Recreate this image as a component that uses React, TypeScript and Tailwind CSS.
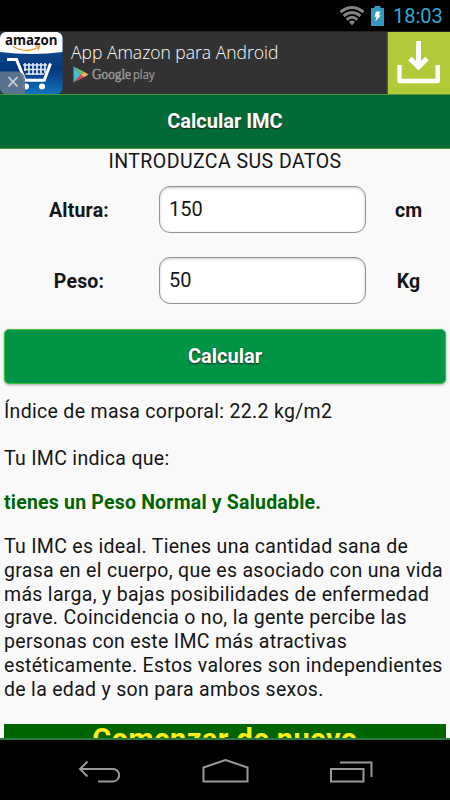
import React from 'react';

interface FieldRowProps {
  label: string;
  value: string;
  unit: string;
}

const StatusBar: React.FC = () => (
  <div className="h-[31px] bg-black flex items-center justify-end pr-[7px] shrink-0">
    <svg className="w-[26px] h-[20px] mr-[6px]" viewBox="0 0 26 20" fill="none" stroke="#848484" strokeWidth="2.9">
      <path d="M1.5 6.2Q13-3 24.5 6.2" />
      <path d="M4.6 10Q13 3.2 21.4 10" />
      <path d="M7.7 13.6Q13 9 18.3 13.6" />
      <path d="M10 15.8Q13 13.2 16 15.8L13 19.5z" fill="#848484" stroke="none" />
    </svg>
    <svg className="w-[13px] h-[20px] mr-[9px]" viewBox="0 0 13 20">
      <path d="M0 2h3.5V0h6v2H13v18H0z" fill="#3397c0" />
      <path d="M5 5.5h4.5L7.8 9.2H10L4.3 15.5l1.2-4.7H3.5z" fill="#fff" />
    </svg>
    <span className="text-[20px] leading-[31px] pt-px text-[#33a6d4] w-[50px] whitespace-nowrap">18:03</span>
  </div>
);

const AdBanner: React.FC = () => (
  <div className="h-[63px] bg-[#323232] flex shrink-0 border-t border-[#222]">
    <svg className="w-[63px] h-[62px] shrink-0" viewBox="0 0 63 62">
      <defs>
        <linearGradient id="sky" x1="0" y1="0" x2="0" y2="1">
          <stop offset="0.3" stopColor="#0c4a8c" />
          <stop offset="0.6" stopColor="#03367c" />
          <stop offset="1" stopColor="#1273bf" />
        </linearGradient>
        <clipPath id="tile">
          <rect width="62.5" height="62" rx="6" />
        </clipPath>
      </defs>
      <g clipPath="url(#tile)">
        <rect width="63" height="62" fill="url(#sky)" />
        <path d="M0 0h63v20Q31 24 0 20z" fill="#fff" />
        <path d="M13 14.5Q26 22 38 15.5M35 14.2l4.5-.2-1.3 4" fill="none" stroke="#f39221" strokeWidth="1.3" />
        <path d="M7 27.5h9.5L25 48.3h20" fill="none" stroke="#fff" strokeWidth="3" />
        <path d="M50.5 31.5L44 49" fill="none" stroke="#fff" strokeWidth="3" />
        <path d="M25 31v8M29 31v12M33 31v12M37 31v12M41 31v12M45 31v10M23 33h24M24 37.5h22M25.5 42h19" stroke="#dce8f4" strokeWidth="1.7" />
        <circle cx="26" cy="54.5" r="3" fill="#fff" />
        <circle cx="42" cy="54.5" r="3" fill="#fff" />
        <path d="M0 39.5h17a8 8 0 018 8v15H0z" fill="#63758c" fillOpacity=".9" />
        <path d="M8.5 45l9 9.5m0-9.5l-9 9.5" stroke="#ced3da" strokeWidth="1.7" />
      </g>
      <text x="5" y="12.5" fontFamily="Open Sans, sans-serif" fontWeight="700" fontSize="14" textLength="52.5" lengthAdjust="spacingAndGlyphs" fill="#111">amazon</text>
    </svg>
    <div className="flex-1 pl-2 pt-2">
      <p className="font-['Open_Sans'] font-light text-[17.5px] leading-6 text-white whitespace-nowrap">App Amazon para Android</p>
      <div className="flex items-center h-[21px] pl-[2px]">
        <svg className="w-[16px] h-[17px] mr-[3px]" viewBox="0 0 16 17">
          <path d="M.5.5v16L8 8.5z" fill="#45bdd0" />
          <path d="M.5.5L11 5.8 8 8.5z" fill="#76bd76" />
          <path d="M.5 16.5L11 11.2 8 8.5z" fill="#d94c61" />
          <path d="M11 5.8l4.5 2.7L11 11.2 8 8.5z" fill="#e9b45c" />
        </svg>
        <svg className="w-[64px] h-[20px]" viewBox="0 0 64 20" fill="#999" stroke="#999" strokeWidth=".5">
          <text x="0" y="14" fontFamily="Liberation Serif, serif" fontSize="15.5" textLength="39" lengthAdjust="spacingAndGlyphs">Google</text>
          <text x="41" y="14" fontFamily="Open Sans, sans-serif" fontSize="12" strokeWidth=".2" textLength="21.5" lengthAdjust="spacingAndGlyphs">play</text>
        </svg>
      </div>
    </div>
    <div className="w-[63px] bg-[#b1cb38] border-l border-[#555b35]">
      <svg className="w-[62px] h-[62px]" viewBox="0 0 62 62" fill="none" stroke="#fff">
        <path d="M11.5 33v16h38.2V33" strokeWidth="4.4" strokeLinejoin="round" />
        <path d="M30.5 9v25" strokeWidth="5" />
        <path d="M22 26.5l8.5 8.5 8.5-8.5" strokeWidth="5" />
      </svg>
    </div>
  </div>
);

const FieldRow: React.FC<FieldRowProps> = ({ label, value, unit }) => (
  <div className="flex items-center h-[47px]">
    <span className="w-[158px] mr-px pt-0.5 text-center font-bold text-[19.5px] tracking-[0.2px]">{label}</span>
    <div className="w-[207px] h-[47px] rounded-[11px] border border-[#929292] bg-white px-[9px] leading-[44px] shadow-[inset_0_1px_3px_rgba(0,0,0,0.2)]">{value}</div>
    <span className="flex-1 pl-px pt-0.5 text-center font-bold text-[19.5px]">{unit}</span>
  </div>
);

const NavBar: React.FC = () => (
  <div className="h-[60px] bg-black flex justify-between pl-[78px] pr-[77px] pt-[19px] shrink-0">
    <svg className="w-[44px] h-[26px]" viewBox="0 0 44 26" fill="none" stroke="#999" strokeWidth="2">
      <path d="M9.5 2.5L2 10l7.5 7.5M2 10h33a6.2 6.2 0 010 12.4H20" />
    </svg>
    <svg className="w-[48px] h-[26px]" viewBox="0 0 48 26" fill="none" stroke="#999" strokeWidth="2">
      <path d="M1.5 22.5V8.5L23.5 1 45.5 8.5v14z" />
    </svg>
    <svg className="w-[44px] h-[26px]" viewBox="0 0 44 26" fill="none" stroke="#999" strokeWidth="2">
      <path d="M2 10h32.5v12.5H2zM11 3.5h31.5V18" />
    </svg>
  </div>
);

export default function App() {
  return (
    <div className="w-[450px] h-[800px] flex flex-col overflow-hidden bg-[#f9f9f9] font-[Roboto,sans-serif] text-[20px] leading-6 text-[#151515]">
      <StatusBar />
      <AdBanner />
      <header className="h-[55px] shrink-0 bg-[#016a36] border-y border-[#4d963c] text-center leading-[53px] font-bold text-white [text-shadow:0_1px_1px_#222]">
        Calcular IMC
      </header>
      <main className="h-[589px] shrink-0 overflow-hidden">
        <p className="pt-px text-center text-[19.5px] leading-[24px] tracking-[0.45px]">INTRODUZCA SUS DATOS</p>
        <div className="pt-3 flex flex-col gap-[24px]">
          <FieldRow label="Altura:" value="150" unit="cm" />
          <FieldRow label="Peso:" value="50" unit="Kg" />
        </div>
        <div className="px-1 text-[19.5px]">
          <button className="mt-[25px] block w-full h-[55px] rounded-[5px] border border-[#3ac23a] bg-[#009446] text-[20px] font-bold text-white leading-[53px] shadow-[0_1px_3px_rgba(0,0,0,0.35)] [text-shadow:0_1px_2px_#222]">
            Calcular
          </button>
          <p className="mt-4 whitespace-nowrap tracking-[0.31px]">Índice de masa corporal: 22.2 kg/m2</p>
          <p className="mt-[23px] whitespace-nowrap tracking-[0.31px]">Tu IMC indica que:</p>
          <p className="mt-5 whitespace-nowrap font-bold tracking-[0.2px] text-[#006400]">tienes un Peso Normal y Saludable.</p>
          <p className="mt-5 whitespace-nowrap leading-[23.8px] tracking-[0.31px]">
            Tu IMC es ideal. Tienes una cantidad sana de<br />
            grasa en el cuerpo, que es asociado con una vida<br />
            más larga, y bajas posibilidades de enfermedad<br />
            grave. Coincidencia o no, la gente percibe las<br />
            personas con este IMC más atractivas<br />
            estéticamente. Estos valores son independientes<br />
            de la edad y son para ambos sexos.
          </p>
          <div className="mt-[22px] h-[60px] bg-[#006400] text-center text-[29px] leading-[31px] tracking-[0.4px] font-bold text-[#ffee19]">Comenzar de nuevo</div>
        </div>
      </main>
      <div className="h-[2px] shrink-0 bg-[#2c7942]" />
      <NavBar />
    </div>
  );
}
